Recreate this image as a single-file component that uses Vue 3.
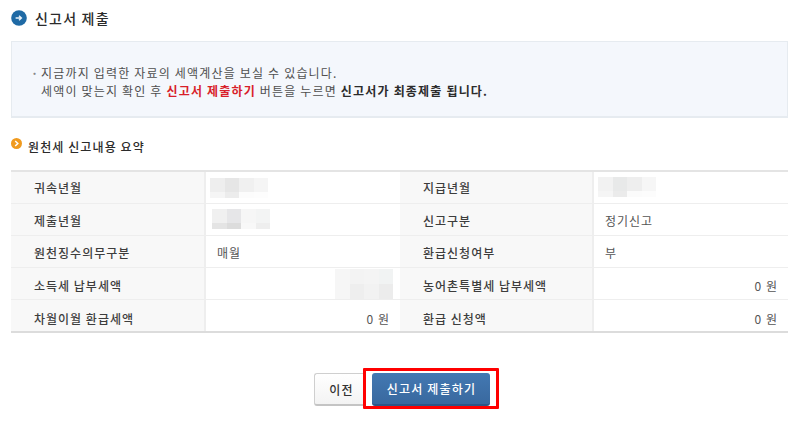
<script setup>
const rows = [
  [{ l: '귀속년월', mosaic: 'm1' }, { l: '지급년월', mosaic: 'm2' }],
  [{ l: '제출년월', mosaic: 'm3' }, { l: '신고구분', v: '정기신고' }],
  [{ l: '원천징수의무구분', v: '매월' }, { l: '환급신청여부', v: '부' }],
  [{ l: '소득세 납부세액', mosaic: 'm4' }, { l: '농어촌특별세 납부세액', v: '0 원', right: true }],
  [{ l: '차월이월 환급세액', v: '0 원', right: true }, { l: '환급 신청액', v: '0 원', right: true }],
]
const mosaics = {
  m1: ['#eeeeee', '#e6e6e6', '#f0f0f0', '#f5f5f5', '#f5f5f5', '#ececec', '#fcfcfc', '#fdfdfd'],
  m2: ['#f2f2f2', '#e8e9e9', '#eeeeee', '#f6f6f6', '#f5f5f5', '#ebebeb', '#fbfbfb', '#fcfcfc'],
  m3: ['#f0f0f0', '#e6e6e8', '#f6f6f6', '#f3f4f4', '#e4e4e4', '#dcdcdc', '#f8f8f8', '#eeeeee'],
  m4: ['#f6f6f6', '#f3f3f3', '#f4f4f4', '#f1f3f3', '#f6f6f6', '#eeeeee', '#f2f2f2', '#ececec'],
}
</script>

<template>
  <div class="page">
    <h1 class="title">
      <svg class="ico" width="16" height="16" viewBox="0 0 16 16">
        <circle cx="8" cy="8" r="7.8" fill="#1f6aa5" />
        <path d="M4.6 8h5.6M8 5.8 10.4 8 8 10.2" fill="none" stroke="#e8f2fa" stroke-width="1.4" />
      </svg>
      <span>신고서 제출</span>
    </h1>
    <div class="notice">
      <p class="line"><span class="dot">·</span>지금까지 입력한 자료의 세액계산을 보실 수 있습니다.</p>
      <p class="line">세액이 맞는지 확인 후 <b class="red">신고서 제출하기</b> 버튼을 누르면 <b>신고서가 최종제출 됩니다.</b></p>
    </div>
    <h2 class="sub">
      <svg class="ico2" width="11" height="11" viewBox="0 0 11 11">
        <circle cx="5.5" cy="5.5" r="5.5" fill="#f09a1e" />
        <path d="M4.2 3 6.8 5.5 4.2 8" fill="none" stroke="#fff" stroke-width="1.5" />
      </svg>
      <span>원천세 신고내용 요약</span>
    </h2>
    <div class="table">
      <template v-for="(row, i) in rows" :key="i">
        <template v-for="cell in row" :key="cell.l">
          <div class="th" :class="['r' + i]">{{ cell.l }}</div>
          <div class="td" :class="['r' + i, { right: cell.right || cell.mosaic === 'm4', [cell.mosaic]: cell.mosaic }]">
            <div v-if="cell.mosaic" class="mosaic">
              <i v-for="(c, k) in mosaics[cell.mosaic]" :key="k" :style="{ background: c }"></i>
            </div>
            <template v-else>{{ cell.v }}</template>
          </div>
        </template>
      </template>
    </div>
    <div class="actions">
      <button class="btn prev">이전</button>
      <div class="hl"><button class="btn submit">신고서 제출하기</button></div>
    </div>
  </div>
</template>

<style>
html, body { margin: 0; background: #fff; }
</style>

<style scoped>
.page {
  width: 800px;
  height: 423px;
  box-sizing: border-box;
  padding: 9px 12px 0 11px;
  overflow: hidden;
  font-family: "Noto Sans CJK KR", "Liberation Sans", sans-serif;
  color: #4a4a4a;
  font-size: 12px;
}
.title {
  display: flex;
  align-items: center;
  gap: 8px;
  height: 18px;
  margin: 0 0 14px;
  font-size: 14px;
  font-weight: 500;
  color: #2b2b2b;
  letter-spacing: 1.2px;
}
.notice {
  height: 77px;
  box-sizing: border-box;
  background: #f4f7fc;
  border: 1px solid #e6ebf0;
  border-bottom-width: 2px;
  padding: 22px 0 0 29px;
  margin-bottom: 21px;
}
.line {
  position: relative;
  margin: 0;
  height: 18px;
  line-height: 18px;
  font-size: 12px;
  letter-spacing: 1.18px;
  color: #4f4f4f;
  white-space: nowrap;
}
.dot { position: absolute; left: -10px; color: #888; font-weight: 700; }
.line b { font-weight: 700; color: #2b2b2b; }
.line b.red { color: #d81f2a; }
.sub {
  display: flex;
  align-items: flex-start;
  gap: 6px;
  height: 16px;
  margin: 0 0 15px;
  font-size: 12px;
  font-weight: 500;
  line-height: 16px;
  color: #2b2b2b;
  letter-spacing: 1.1px;
}
.ico2 { margin-top: -1px; }
.table {
  display: grid;
  grid-template-columns: 195px 194px 194px 194px;
  border-top: 2px solid #e4e4e4;
  border-bottom: 2px solid #dcdcdc;
}
.th, .td {
  box-sizing: border-box;
  height: 32px;
  border-bottom: 1px solid #eeeeee;
  display: flex;
  align-items: center;
  font-size: 12px;
  letter-spacing: 1px;
}
.r1, .r2 { padding-top: 2px; }
.r3 { padding-top: 4px; }
.r4 { padding-top: 5px; border-bottom: 0; height: 31px; }
.th {
  background: #f8f8f8;
  border-right: 2px solid #eeeeee;
  padding-left: 23px;
  color: #3d3d3d;
  font-weight: 500;
}
.td {
  padding-left: 11px;
  padding-right: 10px;
  color: #555;
}
.td.right { justify-content: flex-end; }
.mosaic {
  display: grid;
  grid-template-columns: repeat(4, 14.5px);
  grid-template-rows: 14px 6px;
}
.mosaic i { display: block; }
.m1 .mosaic { margin-left: -7px; }
.m2 .mosaic { margin-left: -7px; margin-top: -2px; }
.m3 .mosaic { margin-left: -5px; margin-top: -4px; }
.m4 { padding: 0; }
.m4 .mosaic { margin-right: 7px; grid-template-rows: 15px 15px; }
.actions {
  display: flex;
  align-items: flex-start;
  margin-top: 35px;
  padding-left: 303px;
}
.btn {
  font-family: inherit;
  font-size: 12px;
  font-weight: 500;
  letter-spacing: 1.2px;
  cursor: pointer;
}
.prev {
  width: 49px;
  height: 33px;
  margin-top: 5px;
  border: 1px solid #cfcfcf;
  border-right: 0;
  border-bottom: 2px solid #c4c4c4;
  border-radius: 3px 0 0 3px;
  background: linear-gradient(#ffffff, #f3f3f3);
  color: #333;
  padding: 0 0 0 5px;
}
.hl {
  border: 3px solid #ff0000;
  padding: 2px 6px 0 6px;
  display: flex;
  border-radius: 1px;
}
.submit {
  width: 118px;
  height: 33px;
  border: 0;
  border-bottom: 2px solid #2c5688;
  border-radius: 3px;
  background: linear-gradient(#4378b2, #39699f);
  color: #fff;
  padding: 0 0 0 1px;
}
</style>
